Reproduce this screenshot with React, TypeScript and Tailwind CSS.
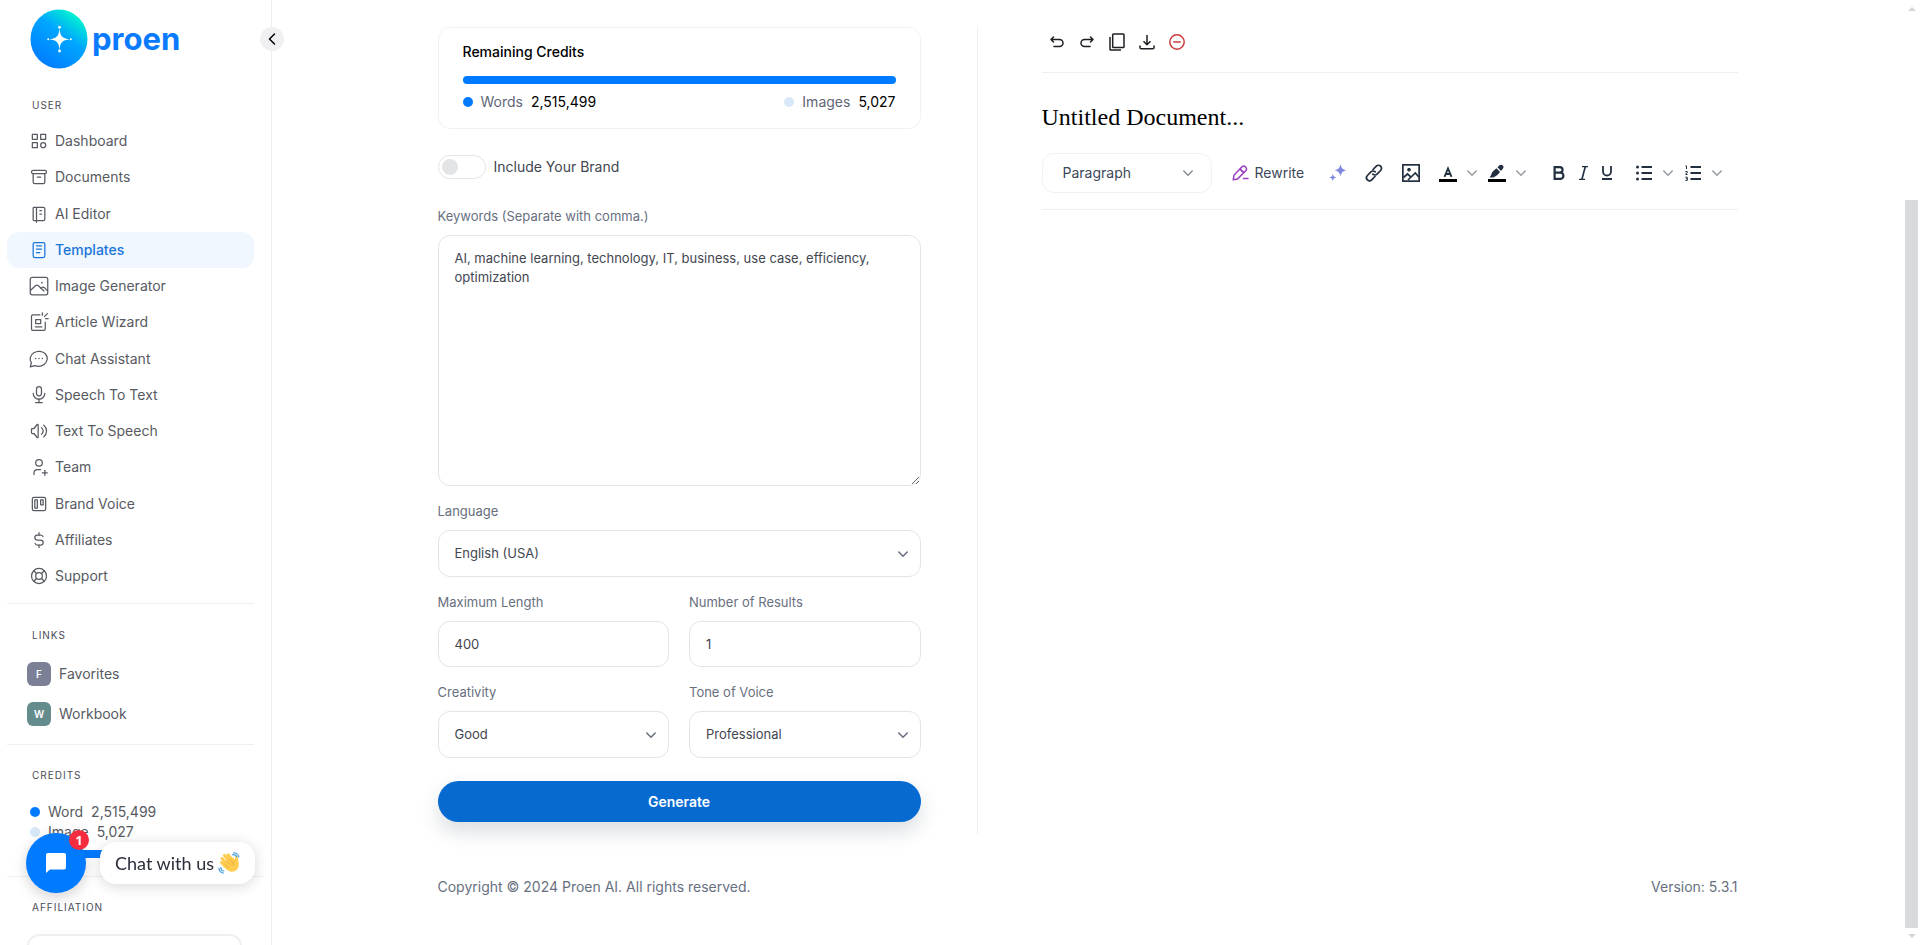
import React, { useState } from 'react';
import {
  TbArchive,
  TbBrandTrello,
  TbCategory,
  TbCurrencyDollar,
  TbLifebuoy,
  TbMicrophone,
  TbNotebook,
  TbNotes,
  TbUserPlus,
  TbVolume,
} from 'react-icons/tb';

interface IconProps {
  size?: number;
  strokeWidth?: number;
}

const Stroke: React.FC<IconProps & { children: React.ReactNode }> = ({ size = 20, strokeWidth = 1.5, children }) => (
  <svg
    width={size}
    height={size}
    viewBox="0 0 24 24"
    fill="none"
    stroke="currentColor"
    strokeWidth={strokeWidth}
    strokeLinecap="round"
    strokeLinejoin="round"
    aria-hidden="true"
  >
    {children}
  </svg>
);

const ImageIcon: React.FC<IconProps> = (props) => (
  <Stroke {...props}>
    <rect x="1.500" y="1.500" width="21" height="21" rx="2.500" />
    <path d="M2 17l6-5.500c.9-.8 2.100-.8 3 0l7 6.500" />
    <path d="M14.500 15c1.400-2 3-2 4.300-.7l3.200 3.200" />
    <path d="M15.500 8h.01" strokeWidth="2" />
  </Stroke>
);

const WizardIcon: React.FC<IconProps> = (props) => (
  <Stroke {...props}>
    <path d="M13 3.500H4.500A1.500 1.500 0 0 0 3 5v15.500A1.500 1.500 0 0 0 4.500 22h13.500a1.500 1.500 0 0 0 1.500-1.500V12" />
    <path d="M8 9h6v5H8zM7.500 17.800h8M16 1v3M23 8h-3M22 2l-3.500 3.500" />
  </Stroke>
);

const ChatIcon: React.FC<IconProps> = (props) => (
  <Stroke {...props}>
    <path d="M1.500 21.500l1.400-5C0 12.300 1.500 7.200 5.800 4.500c4.500-2.700 10.700-2.100 14 1.500 3.300 3.700 2.600 9.100-1.400 12.300-3.200 2.500-7.600 2.900-11.300 1.700z" />
    <path d="M12 11.500h.01M8 11.500h.01M16 11.500h.01" strokeWidth="1.800" />
  </Stroke>
);

const Chevron: React.FC<{ className?: string }> = ({ className }) => (
  <svg width="12" height="12" viewBox="0 0 12 12" fill="none" stroke="currentColor" strokeWidth="1.600" strokeLinecap="round" strokeLinejoin="round" className={className} aria-hidden="true">
    <path d="M1.800 4L6 8.200 10.200 4" />
  </svg>
);

const NAV_ITEMS: { label: string; icon: React.ComponentType<IconProps> }[] = [
  { label: 'Dashboard', icon: TbCategory },
  { label: 'Documents', icon: TbArchive },
  { label: 'AI Editor', icon: TbNotebook },
  { label: 'Templates', icon: TbNotes },
  { label: 'Image Generator', icon: ImageIcon },
  { label: 'Article Wizard', icon: WizardIcon },
  { label: 'Chat Assistant', icon: ChatIcon },
  { label: 'Speech To Text', icon: TbMicrophone },
  { label: 'Text To Speech', icon: TbVolume },
  { label: 'Team', icon: TbUserPlus },
  { label: 'Brand Voice', icon: TbBrandTrello },
  { label: 'Affiliates', icon: TbCurrencyDollar },
  { label: 'Support', icon: TbLifebuoy },
];

const Logo: React.FC = () => (
  <a href="#" className="flex items-center gap-1 text-[#0a7aff]">
    <svg width="58" height="60" viewBox="0 0 58 60" aria-hidden="true">
      <defs>
        <linearGradient id="logo-fill" x1="0.850" y1="0.050" x2="0.250" y2="0.900">
          <stop offset="0" stopColor="#00ffc8" />
          <stop offset="0.450" stopColor="#00a6ff" />
          <stop offset="1" stopColor="#0080ff" />
        </linearGradient>
      </defs>
      <ellipse cx="29" cy="30" rx="28.500" ry="29.500" fill="url(#logo-fill)" />
      <path d="M29.500 19c.5 8 2.500 10.500 10.500 11.300-8 .8-10 3.200-10.500 11.200-.5-8-2.500-10.400-10.500-11.200 8-.8 10-3.300 10.500-11.300z" fill="#fff" />
      <g fill="#fff">
        <circle cx="29.500" cy="18.300" r="1.400" />
        <circle cx="29.500" cy="42" r="1.400" />
        <circle cx="18.200" cy="30.300" r="1" />
        <circle cx="40.800" cy="30.300" r="1" />
      </g>
    </svg>
    <span className="text-[31px] leading-10 font-bold">proen</span>
  </a>
);

const SectionLabel: React.FC<{ children: React.ReactNode }> = ({ children }) => (
  <h2 className="pl-[25px] text-[10px] leading-4 tracking-widest text-[#4a4d55] uppercase">{children}</h2>
);

const Sidebar: React.FC = () => (
  <aside className="h-full w-[272px] shrink-0 overflow-hidden border-r border-[#eeeff0] pt-[9px] pr-[17px] pl-[7px] text-sm text-[#575a62]">
    <div className="pl-[23px]">
      <Logo />
    </div>
    <div className="mt-7">
      <SectionLabel>User</SectionLabel>
    </div>
    <nav className="mt-2.5">
      <ul className="flex h-[471px] flex-col justify-between">
        {NAV_ITEMS.map(({ label, icon: Icon }) => (
          <li key={label}>
            <a
              href="#"
              className={`flex h-9 items-center gap-1.5 rounded-xl pl-[22px] ${
                label === 'Templates' ? 'bg-[#f0f7ff] font-medium text-[#1a75d9]' : ''
              }`}
            >
              <Icon size={20} strokeWidth={1.5} />
              {label}
            </a>
          </li>
        ))}
      </ul>
    </nav>

    <div className="mt-[9px] border-t border-[#eeeff0] pt-[23px]">
      <SectionLabel>Links</SectionLabel>
      <div className="mt-[19px] flex flex-col gap-4 pl-5">
        <a href="#" className="flex items-center gap-2">
          <span className="flex size-6 items-center justify-center rounded-md bg-[#7b8096] text-[10px] font-semibold text-white">F</span>
          Favorites
        </a>
        <a href="#" className="flex items-center gap-2">
          <span className="flex size-6 items-center justify-center rounded-md bg-[#658c8c] text-[10px] font-semibold text-white">W</span>
          Workbook
        </a>
      </div>
    </div>

    <div className="mt-[18px] border-t border-[#eeeff0] pt-[22px]">
      <SectionLabel>Credits</SectionLabel>
      <div className="mt-[19px] pl-[23px] leading-5">
        <div className="flex items-center gap-2">
          <span className="size-2.5 rounded-full bg-[#007bff]" />
          Word <span>2,515,499</span>
        </div>
        <div className="flex items-center gap-2">
          <span className="size-2.5 rounded-full bg-[#d8e8f8]" />
          Image <span>5,027</span>
        </div>
        <div className="mt-2 mr-3 h-2 rounded-full bg-[#007bff]" />
      </div>
    </div>

    <div className="mt-[18px] -mr-[9px] border-t border-[#eeeff0] pt-[22px]">
      <SectionLabel>Affiliation</SectionLabel>
    </div>
    <div className="mt-[19px] mr-3 ml-5 h-20 rounded-xl border-2 border-[#eeeff0]" />
  </aside>
);

const fieldClass =
  'w-full appearance-none rounded-xl border border-[#e3e4e6] bg-white px-4 text-[13px] text-[#42464f] outline-none';

const Field: React.FC<{ id: string; label: string; children: React.ReactNode }> = ({ id, label, children }) => (
  <div>
    <label htmlFor={id} className="mb-[9px] block text-[13px] leading-5 text-[#68707f]">
      {label}
    </label>
    {children}
  </div>
);

const SelectField: React.FC<{ id: string; label: string; options: string[] }> = ({ id, label, options }) => (
  <Field id={id} label={label}>
    <div className="relative">
      <select id={id} className={`${fieldClass} h-[47px]`}>
        {options.map((option) => (
          <option key={option}>{option}</option>
        ))}
      </select>
      <Chevron className="pointer-events-none absolute top-[18px] right-3 text-[#6b7280]" />
    </div>
  </Field>
);

const GeneratorForm: React.FC = () => {
  const [brand, setBrand] = useState(false);
  const [keywords, setKeywords] = useState(
    'AI, machine learning, technology, IT, business, use case, efficiency, optimization'
  );

  return (
    <form className="w-[540px] shrink-0 border-r border-[#eeeff0] pr-14 pb-3" onSubmit={(e) => e.preventDefault()}>
      <section className="rounded-xl border border-[#f1f2f3] px-6 pt-3.5 pb-4 text-sm">
        <h3 className="leading-5 font-medium text-black">Remaining Credits</h3>
        <div className="mt-3.5 h-2 rounded bg-[#007bff]" />
        <div className="mt-2 flex justify-between leading-5 text-[#5f6675]">
          <div className="flex items-center gap-2">
            <span className="size-2.5 rounded-full bg-[#007bff]" />
            Words <span className="text-black">2,515,499</span>
          </div>
          <div className="flex items-center gap-2">
            <span className="size-2.5 rounded-full bg-[#d8e8f8]" />
            Images <span className="text-black">5,027</span>
          </div>
        </div>
      </section>

      <label className="mt-[26px] flex h-6 items-center gap-2 text-sm text-[#42464f]">
        <input
          type="checkbox"
          role="switch"
          checked={brand}
          onChange={(e) => setBrand(e.target.checked)}
          className="h-6 w-12 appearance-none rounded-full border border-[#e3e4e6] p-[3px] before:block before:size-4 before:rounded-full before:bg-[#e3e4e6] checked:before:translate-x-6 checked:before:bg-[#007bff]"
        />
        Include Your Brand
      </label>

      <div className="mt-[27px] grid gap-[15px]">
        <Field id="keywords" label="Keywords (Separate with comma.)">
          <textarea
            id="keywords"
            value={keywords}
            onChange={(e) => setKeywords(e.target.value)}
            className={`${fieldClass} block h-[251px] py-[13px] leading-[19px]`}
          />
        </Field>
        <SelectField id="language" label="Language" options={['English (USA)', 'English (UK)', 'German', 'French']} />
        <div className="grid grid-cols-2 gap-x-5 gap-y-[15px]">
          <Field id="max-length" label="Maximum Length">
            <input id="max-length" type="text" inputMode="numeric" defaultValue="400" className={`${fieldClass} block h-[46px]`} />
          </Field>
          <Field id="results" label="Number of Results">
            <input id="results" type="text" inputMode="numeric" defaultValue="1" className={`${fieldClass} block h-[46px]`} />
          </Field>
          <SelectField id="creativity" label="Creativity" options={['Good', 'Economic', 'Average', 'Premium']} />
          <SelectField id="tone" label="Tone of Voice" options={['Professional', 'Funny', 'Casual', 'Excited']} />
        </div>
      </div>

      <button
        type="submit"
        className="mt-[23px] h-[41px] w-full rounded-full bg-[#066ad1] text-sm font-semibold text-white shadow-[0_10px_20px_rgba(30,50,70,0.16)]"
      >
        Generate
      </button>
    </form>
  );
};

const ToolButton: React.FC<{ label: string; className?: string; children: React.ReactNode }> = ({
  label,
  className = '',
  children,
}) => (
  <button type="button" aria-label={label} className={`flex h-6 shrink-0 items-center justify-center ${className}`}>
    {children}
  </button>
);

const Editor: React.FC = () => (
  <section className="min-w-0 flex-1 pl-16">
    <div className="flex h-[46px] items-start border-b border-[#eeeff0] pt-[3px] text-[#1c1f24]">
      <ToolButton label="Undo" className="w-[30px]">
        <svg width="14" height="12" viewBox="0 0 14 12" fill="none" stroke="currentColor" strokeWidth="1.500" strokeLinecap="round" strokeLinejoin="round">
          <path d="M3.500 1L1 3.500 3.500 6M1.500 3.500h8a3.300 3.300 0 0 1 0 7H4" />
        </svg>
      </ToolButton>
      <ToolButton label="Redo" className="w-[30px]">
        <svg width="14" height="12" viewBox="0 0 14 12" fill="none" stroke="currentColor" strokeWidth="1.500" strokeLinecap="round" strokeLinejoin="round">
          <path d="M10.500 1L13 3.500 10.500 6M12.500 3.500h-8a3.300 3.300 0 0 0 0 7H10" />
        </svg>
      </ToolButton>
      <ToolButton label="Copy" className="w-[30px]">
        <svg width="16" height="18" viewBox="0 0 16 18" fill="none" stroke="currentColor" strokeWidth="1.500" strokeLinejoin="round">
          <rect x="3.700" y="1" width="11.300" height="13.500" rx="0.800" />
          <path d="M1 4v12.300a.8.8 0 0 0 .8.8H12" />
        </svg>
      </ToolButton>
      <ToolButton label="Download" className="w-[30px]">
        <svg width="16" height="16" viewBox="0 0 16 16" fill="none" stroke="currentColor" strokeWidth="1.500" strokeLinejoin="round">
          <path d="M8 1v9.500M4.500 7.200L8 10.700l3.500-3.500M1 11.500v2c0 .8.500 1.300 1.300 1.300h11.400c.8 0 1.300-.5 1.300-1.300v-2" />
        </svg>
      </ToolButton>
      <ToolButton label="Clear" className="w-[30px] text-[#cc3b3b]">
        <svg width="16" height="16" viewBox="0 0 16 16" fill="none" stroke="currentColor" strokeWidth="1.500">
          <circle cx="8" cy="8" r="7.200" />
          <path d="M4.300 8h7.400" />
        </svg>
      </ToolButton>
    </div>

    <input
      aria-label="Document title"
      defaultValue="Untitled Document..."
      className="mt-7 block h-8 w-full font-['Liberation_Serif',serif] text-[24px] text-black outline-none"
    />

    <div className="mt-5 flex items-center border-b border-[#eeeff0] pb-4 text-[#222f3e]">
      <div className="relative w-[170px] shrink-0">
        <select
          aria-label="Block format"
          className="h-10 w-full appearance-none rounded-xl border border-[#f1f2f3] bg-white px-5 text-sm text-[#3c4858] outline-none"
        >
          <option>Paragraph</option>
          <option>Heading 1</option>
          <option>Heading 2</option>
        </select>
        <Chevron className="pointer-events-none absolute top-3.5 right-[18px] text-[#8b8f96]" />
      </div>

      <button type="button" className="ml-5 flex h-6 shrink-0 items-center gap-1.5 text-sm text-[#3c4858]">
        <svg width="17" height="16" viewBox="0 0 17 16" fill="none" stroke="#9b3fc4" strokeWidth="1.500" strokeLinecap="round" strokeLinejoin="round" aria-hidden="true">
          <path d="M10 1.800L2 10.300 1.200 14.800l4.400-.9L14 5.500c1.700-2.400-1.600-5.800-4-3.700z" />
          <path d="M8.500 3.500c.5 2.300 1.700 3.400 3.700 3.800M11.500 13.500h4.500" />
        </svg>
        Rewrite
      </button>

      <ToolButton label="Ask AI" className="ml-[19px] w-[30px]">
        <svg width="18" height="18" viewBox="0 0 18 18" fill="#8088e0">
          <path d="M11.500 0c.9 4.300 2 5.500 6.300 6.300-4.300.9-5.400 2-6.300 6.300-.9-4.300-2-5.400-6.300-6.300 4.300-.8 5.400-2 6.300-6.300z" />
          <path d="M3.800 9.700c.5 2.600 1.200 3.300 3.700 3.800-2.500.5-3.200 1.200-3.700 3.800-.5-2.600-1.200-3.300-3.800-3.800 2.600-.5 3.300-1.200 3.800-3.800z" />
        </svg>
      </ToolButton>
      <ToolButton label="Insert link" className="ml-1.5 w-[30px]">
        <svg width="18" height="18" viewBox="0 0 18 18" fill="none" stroke="currentColor" strokeWidth="1.700" strokeLinecap="round" strokeLinejoin="round">
          <path d="M8 5.500l3.300-3.300a3 3 0 0 1 4.300 4.300l-3.500 3.600a3 3 0 0 1-4.300 0" />
          <path d="M10 12.500l-3.300 3.300a3 3 0 0 1-4.300-4.300L5.900 7.900a3 3 0 0 1 4.300 0" />
        </svg>
      </ToolButton>
      <ToolButton label="Insert image" className="ml-[7px] w-[30px]">
        <svg width="18" height="18" viewBox="0 0 18 18" fill="none" stroke="currentColor" strokeWidth="1.700">
          <rect x="0.850" y="0.850" width="16.300" height="16.300" />
          <circle cx="7" cy="5.700" r="1.400" fill="currentColor" strokeWidth="1" />
          <path d="M1.500 13.500l4-3.500 3 2.700M6 16l7.300-7 3.500 4" />
        </svg>
      </ToolButton>
      <ToolButton label="Text color" className="ml-[13px] w-[18px]">
        <svg width="18" height="18" viewBox="0 0 18 18">
          <path d="M5.500 12.800L9 4.300l3.500 8.500M6.600 10h4.800" fill="none" stroke="currentColor" strokeWidth="1.800" />
          <path d="M0 15h18v3H0z" fill="#000" />
        </svg>
      </ToolButton>
      <ToolButton label="Text color menu" className="ml-1.5 w-[18px] text-[#9a9ea5]">
        <Chevron />
      </ToolButton>
      <ToolButton label="Background color" className="ml-[7px] w-[18px]">
        <svg width="18" height="18" viewBox="0 0 18 18" fill="currentColor">
          <path d="M9.500 3.200l2-1.900c2.400-1.700 5.200 1 3.500 3.300l-2 2.300zM8.500 4.200L12 7.900c-1.700 2.300-4 4.500-7 5.600H1.500l1.700-2.400c.2-2.400 2.300-4.800 5.300-6.900z" />
          <path d="M0 15h18v3H0z" fill="#000" />
        </svg>
      </ToolButton>
      <ToolButton label="Background color menu" className="ml-1.5 w-[18px] text-[#9a9ea5]">
        <Chevron />
      </ToolButton>
      <ToolButton label="Bold" className="ml-[17px] w-6">
        <svg width="12" height="14" viewBox="0 0 12 14" fill="none" stroke="currentColor" strokeWidth="2.200">
          <path d="M1.600 1.100h5.200a2.700 2.700 0 0 1 0 5.500H1.600M1.600 6.600h5.700a3.100 3.100 0 0 1 0 6.300H1.600zM1.600 0v14" />
        </svg>
      </ToolButton>
      <ToolButton label="Italic" className="w-6">
        <svg width="9" height="14" viewBox="0 0 9 14" fill="none" stroke="currentColor">
          <path d="M3 0.600h6M0 13.400h6" strokeWidth="1.100" />
          <path d="M6.300 0.600L2.900 13.400" strokeWidth="1.700" />
        </svg>
      </ToolButton>
      <ToolButton label="Underline" className="w-6">
        <svg width="10" height="14" viewBox="0 0 10 14" fill="none" stroke="currentColor" strokeWidth="1.800">
          <path d="M1 0v5.500a4 4 0 0 0 8 0V0M0 13h10" />
        </svg>
      </ToolButton>
      <ToolButton label="Bullet list" className="ml-4 w-[18px]">
        <svg width="16" height="16" viewBox="0 0 16 16" fill="currentColor">
          <path d="M5.500 1H16v2H5.500zM5.500 7H16v2H5.500zM5.500 13H16v2H5.500z" />
          <circle cx="1.500" cy="2" r="1.500" />
          <circle cx="1.500" cy="8" r="1.500" />
          <circle cx="1.500" cy="14" r="1.500" />
        </svg>
      </ToolButton>
      <ToolButton label="Bullet list menu" className="ml-1.5 w-[18px] text-[#9a9ea5]">
        <Chevron />
      </ToolButton>
      <ToolButton label="Numbered list" className="ml-[7px] w-[18px]">
        <svg width="16" height="16" viewBox="0 0 16 16" fill="none" stroke="currentColor">
          <path d="M5.500 2H16M5.500 8H16M5.500 14H16" strokeWidth="2" />
          <path d="M0.500 0.800h1V4M0.300 6.600h2v1.200l-1.500 1v.7h1.700M0.300 12.200h2v3.200h-2M1 13.800h1.300" />
        </svg>
      </ToolButton>
      <ToolButton label="Numbered list menu" className="ml-1.5 w-[18px] text-[#9a9ea5]">
        <Chevron />
      </ToolButton>
    </div>
  </section>
);

const WaveEmoji: React.FC = () => (
  <svg width="22" height="22" viewBox="0 0 22 22" aria-hidden="true">
    <g stroke="#ffcc4d" strokeWidth="3" strokeLinecap="round">
      <path d="M4 6.500l7 7.500M6.500 3.500l7 8M10 2.800l6 7M3.500 10.500l6 6" />
    </g>
    <path d="M6 12l9-6.500 2 2.500c.3-1.800 0-3.600.8-4.400 1.500-.6 2 .5 2 2 .3 2.400 1 4.400 1 7.400-.3 5-4.500 7.500-8.500 6.500-3-.8-4.800-4.500-6.300-7.500z" fill="#ffcc4d" />
    <path d="M8.500 8.500l4 4.300M11 6.500l4 4.800M7 12l3.500 3.500M17 8c-2 1.500-2.500 3.500-1.500 5.500" fill="none" stroke="#e8a33a" strokeWidth="0.800" strokeLinecap="round" />
    <path d="M15.500 1c2.700-.3 5 1.500 5.300 4M14.500 2.800c2-.4 3.800.5 4.300 2.200M1 16c-.2 2.700 1.500 4.800 4.500 5M2.800 15.500c0 2 1 3.300 3 3.500" fill="none" stroke="#4a9fe0" strokeWidth="1.200" strokeLinecap="round" />
  </svg>
);

const ChatWidget: React.FC = () => (
  <div className="fixed bottom-[52px] left-[26px] flex items-center gap-3.5">
    <button type="button" aria-label="Open chat" className="relative flex size-[60px] items-center justify-center rounded-full bg-[#007bff] shadow-[0_4px_14px_rgba(0,0,0,0.18)]">
      <svg width="20" height="20" viewBox="0 0 20 20" fill="#fff" aria-hidden="true">
        <path d="M2 0h16a2 2 0 0 1 2 2v12.500a2 2 0 0 1-2 2H4L0 20V2a2 2 0 0 1 2-2z" />
      </svg>
      <span className="absolute -top-[3px] -right-[3px] flex size-5 items-center justify-center rounded-full bg-[#f52d3f] font-['Open_Sans',sans-serif] text-[13px] leading-5 font-bold text-white">
        1
      </span>
    </button>
    <button type="button" className="flex h-[42px] items-center gap-1 rounded-2xl bg-white px-[15px] font-[Lato,sans-serif] text-[18px] text-[#2a2d3a] shadow-[0_2px_14px_rgba(0,0,0,0.16)]">
      Chat with us
      <WaveEmoji />
    </button>
  </div>
);

const ScrollRail: React.FC = () => (
  <div className="flex h-full w-[17px] shrink-0 flex-col items-center pt-[7px] pb-[7px]" aria-hidden="true">
    <svg width="8" height="4" viewBox="0 0 8 4" fill="#d4d5d7">
      <path d="M0 4l4-4 4 4z" />
    </svg>
    <div className="mt-[189px] mb-1.5 w-[13px] flex-1 bg-[#d9dadd]" />
    <svg width="8" height="4" viewBox="0 0 8 4" fill="#d4d5d7">
      <path d="M0 0l4 4 4-4z" />
    </svg>
  </div>
);

const App: React.FC = () => (
  <div className="relative flex h-screen overflow-hidden bg-white font-[Inter,sans-serif]">
    <Sidebar />
    <button
      type="button"
      aria-label="Collapse sidebar"
      className="absolute top-[27px] left-[260px] flex size-6 items-center justify-center rounded-full bg-[#f0f0f2] text-black"
    >
      <svg width="8" height="12" viewBox="0 0 8 12" fill="none" stroke="currentColor" strokeWidth="1.500" strokeLinecap="round" strokeLinejoin="round">
        <path d="M6.500 1l-5 5 5 5" />
      </svg>
    </button>

    <main className="min-w-0 flex-1 overflow-hidden">
      <div className="mx-auto max-w-[1300px] pt-[27px]">
        <div className="flex">
          <GeneratorForm />
          <Editor />
        </div>
        <footer className="mt-[43px] flex justify-between text-sm leading-5 text-[#68707f]">
          <p>Copyright © 2024 Proen AI. All rights reserved.</p>
          <p>Version: 5.3.1</p>
        </footer>
      </div>
    </main>
    <ScrollRail />
    <ChatWidget />
  </div>
);

export default App;
